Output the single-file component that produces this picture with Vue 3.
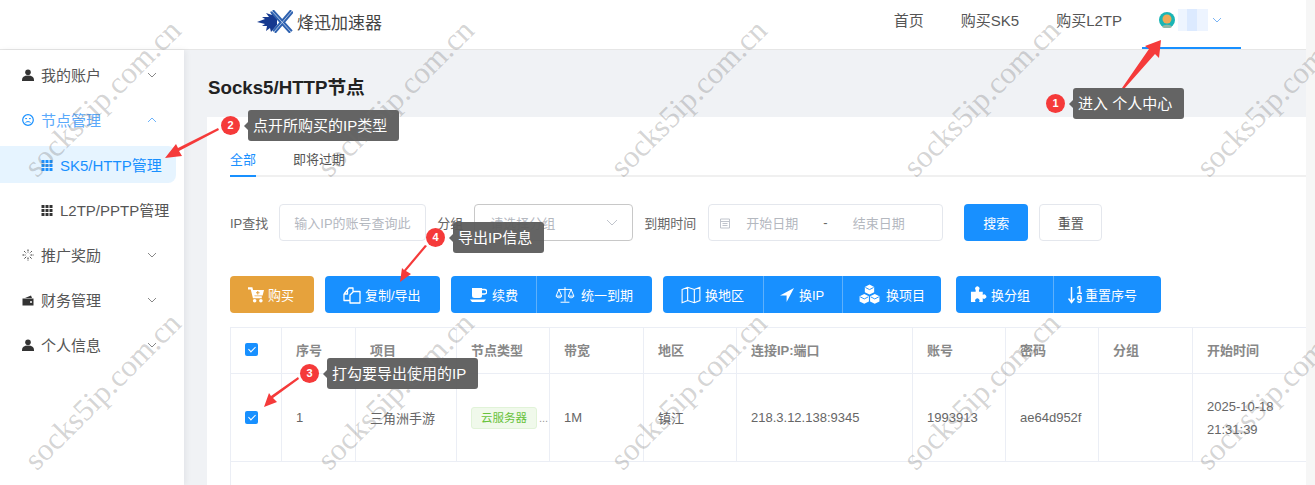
<script setup>
/**
 * Node list page, with the tutorial marks and the watermark on top
 */
const menu = [
	{ label: "我的账户", icon: "user" },
	{ label: "节点管理", icon: "smile", open: true },
	{ label: "SK5/HTTP管理", icon: "grid", sub: true, active: true },
	{ label: "L2TP/PPTP管理", icon: "grid", sub: true },
	{ label: "推广奖励", icon: "spin" },
	{ label: "财务管理", icon: "wallet" },
	{ label: "个人信息", icon: "user" },
]

const groups = [
	{ color: "orange", items: [{ label: "购买", icon: "cart", width: 84, pad: 18, size: 16, gap: 4 }] },
	{ color: "blue", items: [{ label: "复制/导出", icon: "copy", width: 115, pad: 18, size: 18, gap: 4 }] },
	{
		color: "blue",
		items: [
			{ label: "续费", icon: "coffee", width: 85, pad: 18, size: 18, gap: 5 },
			{ label: "统一到期", icon: "scale", width: 116, pad: 18, size: 20, gap: 6 },
		],
	},
	{
		color: "blue",
		items: [
			{ label: "换地区", icon: "map", width: 100, pad: 18, size: 20, gap: 4 },
			{ label: "换IP", icon: "send", width: 79, pad: 16, size: 14, gap: 5 },
			{ label: "换项目", icon: "cubes", width: 99, pad: 16, size: 21, gap: 6 },
		],
	},
	{
		color: "blue",
		items: [
			{ label: "换分组", icon: "puzzle", width: 97, pad: 14, size: 17, gap: 4 },
			{ label: "重置序号", icon: "sort", width: 108, pad: 14, size: 13, gap: 3 },
		],
	},
]

const columns = [
	{ label: "", width: 51 },
	{ label: "序号", width: 74 },
	{ label: "项目", width: 101 },
	{ label: "节点类型", width: 93 },
	{ label: "带宽", width: 94 },
	{ label: "地区", width: 93 },
	{ label: "连接IP:端口", width: 176 },
	{ label: "账号", width: 93 },
	{ label: "密码", width: 93 },
	{ label: "分组", width: 94 },
	{ label: "开始时间", width: 114 },
]

const notes = [
	{ n: 1, text: "进入 个人中心", cls: "note1" },
	{ n: 2, text: "点开所购买的IP类型", cls: "note2" },
	{ n: 3, text: "打勾要导出使用的IP", cls: "note3" },
	{ n: 4, text: "导出IP信息", cls: "note4" },
]

const marks = Array.from({ length: 10 })
</script>

<template>
	<div class="page">
		<div class="main">
			<header class="header">
				<div class="brand">
					<svg class="logo" viewBox="0 0 36 23" width="36" height="23">
						<path d="M0 12 8 9 5 7 12 7 9 3 15 5 13 1 20 8 20 15 14 22 13 18 9 21 10 16 5 16 8 14Z" fill="#16398f" />
						<path d="M15 1 34 22M35 1 17 22" stroke="#2f62b0" stroke-width="4.500" fill="none" />
						<path d="M15 1 34 22M35 1 17 22" stroke="#dfe8f5" stroke-width="0.700" fill="none" />
					</svg>
					<span>烽迅加速器</span>
				</div>
				<nav class="nav">
					<a>首页</a>
					<a>购买SK5</a>
					<a>购买L2TP</a>
					<div class="account">
						<svg viewBox="0 0 16 16" width="16" height="16">
							<circle cx="8" cy="8" r="8" fill="#19b5b5" />
							<circle cx="8" cy="7" r="4.500" fill="#eea957" />
							<path d="M3 15c1-3 9-3 10 0l-2 1H5Z" fill="#8fb7a6" />
						</svg>
						<span class="blur"></span>
						<svg class="chev" viewBox="0 0 10 6" width="10" height="6"><path d="M1 1l4 4 4-4" /></svg>
					</div>
				</nav>
			</header>

			<div class="body">
				<aside class="side">
					<div
						v-for="item in menu"
						:key="item.label"
						class="menu_item"
						:class="{ sub: item.sub, active: item.active, open: item.open }"
					>
						<svg class="menu_icon" viewBox="0 0 12 12" width="12" height="12">
							<template v-if="item.icon === 'user'">
								<circle cx="6" cy="3.200" r="2.800" fill="currentColor" />
								<path d="M0 11c0-3 2-4.500 6-4.500s6 1.500 6 4.500v1H0Z" fill="currentColor" />
							</template>
							<template v-else-if="item.icon === 'smile'">
								<circle cx="6" cy="6" r="5.300" fill="none" stroke="currentColor" stroke-width="1.200" />
								<path d="M3.200 4.600h1.800M7 4.600h1.800M3.500 8.500c1.500-1.200 3.500-1.200 5 0" fill="none" stroke="currentColor" />
							</template>
							<template v-else-if="item.icon === 'grid'">
								<path d="M0.500 1h3v3h-3ZM4.500 1h3v3h-3ZM8.500 1h3v3h-3ZM0.500 5h3v3h-3ZM4.500 5h3v3h-3ZM8.500 5h3v3h-3ZM0.500 9h3v3h-3ZM4.500 9h3v3h-3ZM8.500 9h3v3h-3Z" fill="currentColor" />
							</template>
							<template v-else-if="item.icon === 'spin'">
								<path d="M6 0.500v3M6 8.500v3M0.500 6h3M8.500 6h3M2.200 2.200l2 2M7.800 7.800l2 2M9.800 2.200l-2 2M4.200 7.800l-2 2" fill="none" stroke="currentColor" stroke-dasharray="1.500 0.600" />
							</template>
							<template v-else>
								<path d="M0.500 4.500h11v7h-11Z M3 4 9 1.500 10 4Z" fill="currentColor" />
								<circle cx="9" cy="8" r="1" fill="#fff" />
							</template>
						</svg>
						<span class="menu_label">{{ item.label }}</span>
						<svg v-if="!item.sub" class="menu_chev" viewBox="0 0 10 6" width="10" height="6">
							<path :d="item.open ? 'M1 5l4-4 4 4' : 'M1 1l4 4 4-4'" />
						</svg>
					</div>
				</aside>

				<section class="content">
					<h1 class="title">Socks5/HTTP节点</h1>

					<div class="card">
						<div class="tabs">
							<span class="tab current">全部</span>
							<span class="tab">即将过期</span>
						</div>

						<div class="filters">
							<label>IP查找</label>
							<div class="field ip"><span class="hold">输入IP的账号查询此</span></div>
							<label class="gap_label">分组</label>
							<div class="field select">
								<span class="hold">请选择分组</span>
								<svg class="sel_chev" viewBox="0 0 12 7" width="12" height="7"><path d="M1 1l5 5 5-5" /></svg>
							</div>
							<label class="gap_label">到期时间</label>
							<div class="field dates">
								<svg viewBox="0 0 12 12" width="12" height="12" class="cal">
									<path d="M1.500 2h9v9h-9ZM1.500 4.500h9M3.500 6.500h5M3.500 8.500h5" fill="none" stroke="#c0c4cc" />
								</svg>
								<span class="hold d1">开始日期</span>
								<span class="dash">-</span>
								<span class="hold d2">结束日期</span>
							</div>
							<button class="btn_search">搜索</button>
							<button class="btn_reset">重置</button>
						</div>

						<div class="actions">
							<div v-for="(group, i) in groups" :key="i" class="group" :class="group.color">
								<div
									v-for="item in group.items"
									:key="item.label"
									class="action"
									:style="{ width: `${item.width}px`, paddingLeft: `${item.pad}px`, gap: `${item.gap}px` }"
								>
									<svg
										class="action_icon"
										viewBox="0 0 18 18"
										:width="item.icon === 'sort' ? 14 : item.size"
										:height="item.icon === 'sort' ? 18 : item.size"
										:preserveAspectRatio="item.icon === 'sort' ? 'xMinYMid slice' : 'xMidYMid meet'"
									>
										<template v-if="item.icon === 'cart'">
											<path d="M0 1.500h4l2.500 10h9" fill="none" stroke="#fff" stroke-width="2.400" />
											<path d="M5 3.500h13l-1.500 6H6.500Z" fill="#fff" />
											<path d="M11 4.500v4M9 6.500h4" stroke="#e6a23c" stroke-width="1.200" fill="none" />
											<circle cx="7.500" cy="15.500" r="2" fill="#fff" /><circle cx="14.500" cy="15.500" r="2" fill="#fff" />
										</template>
										<template v-else-if="item.icon === 'copy'">
											<path d="M1 8l5-6h4v3.500M1 8v6.500h5.500M1 8h3.500V4.500M7 9l3.500-3.500h6.500v11.500H7Z" fill="none" stroke="#fff" stroke-width="1.300" stroke-linejoin="round" />
										</template>
										<template v-else-if="item.icon === 'coffee'">
											<path d="M3 2h10v7.500a2.500 2.500 0 0 1-2.500 2.500h-5A2.500 2.500 0 0 1 3 9.500Z" fill="#fff" />
											<path d="M13 3.500h2.500a1.500 1.500 0 0 1 0 4.500H13" fill="none" stroke="#fff" stroke-width="1.400" />
											<path d="M1 13.500h16l-2 2.500H3Z" fill="#fff" />
										</template>
										<template v-else-if="item.icon === 'scale'">
											<path d="M9 2v13M5 15.500h8M3 4h12M3.500 4 1 10h5ZM14.500 4 12 10h5ZM1 10c.5 2 4.500 2 5 0M12 10c.5 2 4.500 2 5 0" fill="none" stroke="#fff" stroke-width="0.900" />
										</template>
										<template v-else-if="item.icon === 'map'">
											<path d="M1 4l5-2 6 2 5-2v12l-5 2-6-2-5 2ZM6 2v12M12 4v12" fill="none" stroke="#fff" stroke-width="1" />
										</template>
										<template v-else-if="item.icon === 'send'">
											<path d="M18 0 0 9.500H8.500V18Z" fill="#fff" />
										</template>
										<template v-else-if="item.icon === 'cubes'">
											<path d="M9 .500l4 2v4.500l-4 2-4-2V2.500ZM4.500 8.500l4 2v4.500l-4 2-4-2v-4.500ZM13.500 8.500l4 2v4.500l-4 2-4-2v-4.500Z" fill="#fff" />
											<path d="M5.500 3l3.500 1.800L12.500 3M1 11l3.500 1.800L8 11M10 11l3.500 1.800L17 11" fill="none" stroke="#1890ff" stroke-width="0.800" />
										</template>
										<template v-else-if="item.icon === 'puzzle'">
											<path d="M1 6h5V4.200a2.300 2.300 0 1 1 3.500 0V6h4v3.500a2.300 2.300 0 1 1 0 3.500V17h-4a2.300 2.300 0 1 0-3.500 0H1Z" fill="#fff" />
										</template>
										<template v-else>
											<path d="M3.500 1v15M.500 12.500l3 4 3-4" fill="none" stroke="#fff" stroke-width="1.500" />
											<text x="8.500" y="8" class="sort_num">1</text>
											<text x="8.500" y="17" class="sort_num">9</text>
										</template>
									</svg>
									<span>{{ item.label }}</span>
								</div>
							</div>
						</div>

						<table class="grid">
							<colgroup>
								<col v-for="col in columns" :key="col.label" :style="{ width: `${col.width}px` }" />
							</colgroup>
							<thead>
								<tr>
									<th v-for="col in columns" :key="col.label">
										<span v-if="!col.label" class="check"></span>
										{{ col.label }}
									</th>
								</tr>
							</thead>
							<tbody>
								<tr>
									<td><span class="check"></span></td>
									<td>1</td>
									<td>三角洲手游</td>
									<td class="type_cell"><span class="tag">云服务器</span><span class="more">...</span></td>
									<td>1M</td>
									<td>镇江</td>
									<td>218.3.12.138:9345</td>
									<td>1993913</td>
									<td>ae64d952f</td>
									<td></td>
									<td class="time">2025-10-18<br />21:31:39</td>
								</tr>
							</tbody>
						</table>
						<div class="grid_rest"></div>
					</div>
				</section>
			</div>
		</div>
		<div class="scrollbar"></div>

		<!-- tutorial marks -->
		<svg class="arrows" viewBox="0 0 1315 485" width="1315" height="485">
			<path d="M1122 88 1149 49 1145 46 1161 40 1159 58 1155 54 1124 89Z" />
			<path d="M219 130 179 151 182 156 165 158 176 144 178 148 218 128Z" />
			<path d="M299 379 273 398 277 402 264 407 269 393 271 396 298 377Z" />
			<path d="M427 246 406 271 411 274 400 282 402 268 404 270 425 245Z" />
		</svg>
		<div v-for="note in notes" :key="note.n" class="note" :class="note.cls">
			<span class="badge">{{ note.n }}</span>
			<span class="bubble">{{ note.text }}</span>
		</div>

		<!-- watermark -->
		<div class="marks">
			<span v-for="(_, i) in marks" :key="i" class="mark"><i>socks5ip.com.cn</i></span>
		</div>
	</div>
</template>

<style scoped>
.page {
	position: relative;
	display: flex;
	width: 1315px;
	height: 485px;
	overflow: hidden;
	font-family: "Liberation Sans", "Noto Sans CJK SC", sans-serif;
	color: #555;
	background: #fff;
}

.main {
	width: 1306px;
	display: flex;
	flex-direction: column;
	background: #f0f2f5;
}

.scrollbar {
	width: 9px;
	background: #f6f6f6;
}

.header {
	display: flex;
	align-items: center;
	height: 49px;
	padding-left: 257px;
	background: #fff;
	border-bottom: 1px solid #e6e6e6;
	flex-shrink: 0;
}

.brand {
	display: flex;
	align-items: center;
	gap: 4px;
	font-size: 17px;
	color: #444;
	padding-bottom: 7px;
}

.nav {
	display: flex;
	align-items: center;
	gap: 37px;
	margin-left: auto;
	margin-right: 65px;
	height: 49px;
	font-size: 15px;
	color: #555;
}

.nav a {
	padding-bottom: 11px;
}

.account {
	display: flex;
	align-items: center;
	align-self: stretch;
	width: 99px;
	margin-left: -17px;
	padding: 0 0 7px 17px;
	box-sizing: border-box;
	border-bottom: 2px solid #1890ff;
	height: 49px;
}

.blur {
	width: 30px;
	height: 22px;
	margin-left: 3px;
	background: linear-gradient(90deg, #eef5ff 0 30%, #dceaff 30% 65%, #edf4ff 65%);
}

.chev {
	margin-left: 4px;
	color: #7ab4f5;
}

.chev path,
.menu_chev path,
.sel_chev path {
	fill: none;
	stroke: currentColor;
	stroke-width: 1;
}

.body {
	flex: 1;
	display: flex;
	min-height: 0;
}

.side {
	width: 184px;
	flex-shrink: 0;
	padding-top: 6px;
	background: #fff;
	box-shadow: 2px 0 6px rgba(0, 21, 41, 0.06);
	font-size: 15px;
	color: #555;
}

.menu_item {
	display: flex;
	align-items: center;
	height: 37px;
	margin: 0 8px 8px 0;
	padding-left: 22px;
	color: #555;
}

.menu_item.open {
	color: #5aa9fb;
}

.menu_item.sub {
	padding-left: 41px;
}

.menu_item.active {
	color: #1890ff;
	background: #e6f4ff;
	border-radius: 0 8px 8px 0;
}

.menu_icon {
	flex-shrink: 0;
	color: #333;
}

.open .menu_icon,
.active .menu_icon {
	color: #1890ff;
}

.menu_label {
	margin-left: 7px;
	white-space: nowrap;
}

.menu_chev {
	margin-left: auto;
	margin-right: 19px;
	color: #888;
}

.open .menu_chev {
	color: #6cb3fb;
}

.content {
	flex: 1;
	min-width: 0;
	padding-left: 23px;
}

.title {
	margin: 0;
	padding: 26px 0 0 1px;
	height: 41px;
	font-size: 18.700px;
	line-height: 24px;
	font-weight: 700;
	color: #222;
}

.card {
	height: 368px;
	padding: 0 0 0 23px;
	background: #fff;
	overflow: hidden;
}

.tabs {
	display: flex;
	gap: 37px;
	height: 60px;
	box-sizing: border-box;
	border-bottom: 2px solid #f0f0f0;
	align-items: flex-end;
	font-size: 13px;
	color: #555;
}

.tab {
	height: 28px;
	box-sizing: border-box;
	margin-bottom: -2px;
}

.tab.current {
	color: #1890ff;
	border-bottom: 2px solid #1890ff;
}

.filters {
	display: flex;
	align-items: center;
	margin-top: 27px;
	height: 37px;
	font-size: 13px;
	color: #666;
}

.filters label {
	white-space: nowrap;
}

.gap_label {
	margin-left: 11px;
}

.field {
	display: flex;
	align-items: center;
	height: 37px;
	box-sizing: border-box;
	border: 1px solid #e4e7ed;
	border-radius: 4px;
	margin-left: 11px;
	color: #b4b8bf;
	white-space: nowrap;
	overflow: hidden;
}

.ip {
	width: 147px;
	padding-left: 14px;
}

.select {
	width: 159px;
	padding-left: 15px;
	border-color: #c8c8c8;
	justify-content: space-between;
	padding-right: 14px;
}

.sel_chev {
	color: #c0c4cc;
}

.dates {
	width: 235px;
	margin-left: 12px;
	padding-left: 10px;
}

.cal {
	flex-shrink: 0;
}

.d1 {
	margin-left: 15px;
}

.dash {
	margin-left: 25px;
	color: #666;
}

.d2 {
	margin-left: 25px;
}

.btn_search,
.btn_reset {
	height: 37px;
	border-radius: 4px;
	font-family: inherit;
	font-size: 13px;
	padding: 0;
}

.btn_search {
	width: 64px;
	margin-left: 21px;
	border: none;
	background: #1890ff;
	color: #fff;
}

.btn_reset {
	width: 63px;
	margin-left: 11px;
	border: 1px solid #e4e7ed;
	background: #fff;
	color: #555;
}

.actions {
	display: flex;
	gap: 11px;
	margin-top: 35px;
	height: 37px;
	font-size: 13px;
	color: #fff;
}

.group {
	display: flex;
	height: 37px;
	border-radius: 4px;
}

.group:nth-child(5) {
	margin-left: 4px;
}

.group.blue {
	background: #1890ff;
}

.group.orange {
	background: #e6a23c;
}

.action {
	display: flex;
	align-items: center;
	height: 37px;
	box-sizing: border-box;
	white-space: nowrap;
}

.action + .action {
	border-left: 1px solid #5eb0fb;
}

.action_icon {
	flex-shrink: 0;
}

.sort_num {
	font-size: 10px;
	font-weight: 700;
	fill: #fff;
}

.grid {
	margin-top: 14px;
	width: 1076px;
	table-layout: fixed;
	border-collapse: collapse;
	font-size: 13px;
	color: #666;
}

.grid th,
.grid td {
	border: 1px solid #ebeef5;
	padding: 0 0 0 14px;
	text-align: left;
	white-space: nowrap;
	overflow: hidden;
}

.grid th {
	height: 42px;
	padding-bottom: 3px;
	font-weight: 700;
	color: #888;
}

.grid td {
	height: 87px;
}

.grid td.time {
	line-height: 23px;
}

.check {
	display: block;
	position: relative;
	width: 13px;
	height: 13px;
	border-radius: 2px;
	background: #1890ff;
}

.check::after {
	content: "";
	position: absolute;
	left: 4.500px;
	top: 2px;
	width: 3px;
	height: 6px;
	border: solid #fff;
	border-width: 0 1px 1px 0;
	transform: rotate(45deg);
}

.type_cell {
	font-size: 12px;
}

.tag {
	display: inline-block;
	height: 22px;
	line-height: 20px;
	box-sizing: border-box;
	padding: 0 9px;
	font-size: 11.500px;
	color: #67c23a;
	background: #f0f9eb;
	border: 1px solid #e1f3d8;
	border-radius: 3px;
}

.more {
	margin-left: 2px;
	font-size: 11px;
	color: #999;
}

.grid_rest {
	width: 1px;
	height: 30px;
	background: #ebeef5;
}

.arrows {
	position: absolute;
	left: 0;
	top: 0;
	fill: #f53a3a;
	pointer-events: none;
}

.note {
	position: absolute;
	display: flex;
	align-items: center;
	gap: 8px;
}

.note1 {
	left: 1046px;
	top: 88px;
}

.note2 {
	left: 221px;
	top: 110px;
}

.note3 {
	left: 300px;
	top: 358px;
}

.note4 {
	left: 426px;
	top: 222px;
}

.badge {
	width: 19px;
	height: 19px;
	border-radius: 50%;
	background: #f53a3a;
	color: #fff;
	font-size: 11px;
	font-weight: 700;
	line-height: 19px;
	text-align: center;
}

.bubble {
	position: relative;
	height: 31px;
	line-height: 31px;
	padding: 0 12px 0 5px;
	border-radius: 3px;
	background: rgba(90, 90, 90, 0.94);
	color: #fff;
	font-size: 15px;
	white-space: nowrap;
}

.bubble::before {
	content: "";
	position: absolute;
	left: -4px;
	top: 12px;
	border: 4px solid transparent;
	border-left: 0;
	border-right-color: rgba(90, 90, 90, 0.94);
}

.marks {
	position: absolute;
	left: 0;
	top: 0;
	display: grid;
	grid-template-columns: repeat(5, 293px);
	grid-auto-rows: 293px;
	pointer-events: none;
}

.mark {
	position: relative;
}

.mark i {
	position: absolute;
	left: -2px;
	top: 75px;
	width: 216px;
	font: normal 31px/40px "Liberation Serif", serif;
	color: rgba(110, 110, 110, 0.3);
	white-space: nowrap;
	transform: rotate(-45deg);
}
</style>
